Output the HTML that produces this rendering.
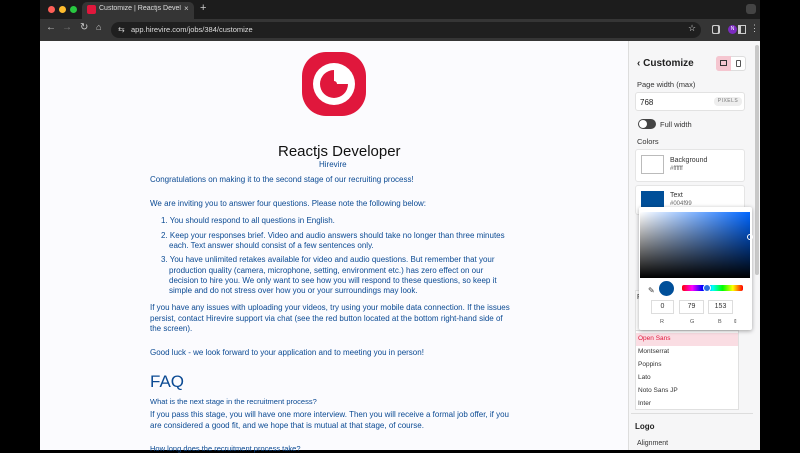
<!DOCTYPE html>
<html><head><meta charset="utf-8"><style>
*{margin:0;padding:0;box-sizing:border-box}
body{width:800px;height:450px;background:#000;font-family:"Liberation Sans",sans-serif;position:relative;overflow:hidden}
.a{position:absolute;white-space:nowrap}
.t{color:#0b4a93;font-size:8px}
.s{font-size:7px;color:#333}
</style></head><body>
<!-- tab bar -->
<div class="a" style="left:40px;top:0;width:720px;height:19px;background:#1c1c1c"></div>
<div class="a" style="left:48px;top:6px;width:7px;height:7px;border-radius:50%;background:#fe5f57"></div>
<div class="a" style="left:59px;top:6px;width:7px;height:7px;border-radius:50%;background:#febc2e"></div>
<div class="a" style="left:70px;top:6px;width:7px;height:7px;border-radius:50%;background:#28c840"></div>
<div class="a" style="left:82px;top:2px;width:112px;height:17px;background:#353535;border-radius:5px 5px 0 0"></div>
<div class="a" style="left:87px;top:5px;width:9px;height:9px;border-radius:2px;background:#e0173c"></div>
<div class="a" style="left:99px;top:5px;font-size:7px;color:#ddd;width:82px;overflow:hidden">Customize | Reactjs Develope</div>
<div class="a" style="left:184px;top:4px;font-size:8px;color:#ccc">×</div>
<div class="a" style="left:200px;top:2px;font-size:11px;color:#ccc">+</div>
<div class="a" style="left:746px;top:4px;width:10px;height:10px;border-radius:3px;background:#444"></div>
<!-- toolbar -->
<div class="a" style="left:40px;top:19px;width:720px;height:22px;background:#353535"></div>
<div class="a" style="left:46px;top:22px;font-size:10px;color:#ccc">←</div>
<div class="a" style="left:62px;top:22px;font-size:10px;color:#777">→</div>
<div class="a" style="left:80px;top:22px;font-size:10px;color:#ccc">↻</div>
<div class="a" style="left:96px;top:22px;font-size:9px;color:#ccc">⌂</div>
<div class="a" style="left:111px;top:22px;width:590px;height:16px;border-radius:8px;background:#1f1f1f"></div>
<div class="a" style="left:118px;top:25px;font-size:8px;color:#ccc">⇆</div>
<div class="a" style="left:131px;top:25px;font-size:7.5px;color:#ddd">app.hirevire.com/jobs/384/customize</div>
<div class="a" style="left:688px;top:23px;font-size:9px;color:#ddd">☆</div>
<div class="a" style="left:712px;top:25px;width:7px;height:9px;border:1px solid #ccc;border-radius:2px"></div>
<div class="a" style="left:714px;top:25px;width:8px;height:9px;border:1px solid #ccc;border-left-width:3px;display:none"></div>
<div class="a" style="left:712px;top:25px;width:8px;height:9px;border:1px solid #ccc;border-radius:2px"></div>
<div class="a" style="left:718px;top:25px;width:8px;height:9px;border:1px solid #ccc;border-right-width:3px;left:713px;display:none"></div>
<div class="a" style="left:712px;top:25px;width:9px;height:10px;border:1px solid #ccc;border-right-width:3px;display:none"></div>
<div class="a" style="left:712px;top:25px;width:9px;height:10px;border:1px solid #ccc;border-right-width:3px;left:712px;display:none"></div>
<div class="a" style="left:712px;top:25px;width:9px;height:10px;border:1px solid #ccc;display:none"></div>
<div class="a" style="left:712px;top:25px;display:none"></div>
<div class="a" style="left:712px;top:25px;width:9px;height:10px;border:1px solid #ccc;border-right-width:3px;left:712px;display:none"></div>
<div class="a" style="left:712px;top:25px;width:8px;height:9px;border:1px solid #ccc;border-right-width:3px;left:712px;display:none"></div>
<div class="a" style="left:712px;top:25px;width:8px;height:9px;left:712px;display:none"></div>
<div class="a" style="left:712px;top:25px;width:8px;height:9px;left:712px;display:none"></div>
<div class="a" style="left:712px;top:25px;display:none"></div>
<div class="a" style="left:712px;top:25px;display:none"></div>
<div class="a" style="left:712px;top:25px;display:none"></div>
<div class="a" style="left:712px;top:25px;display:none"></div>
<div class="a" style="left:712px;top:25px;width:8px;height:9px;border:1px solid #ccc;border-right-width:3px;left:712px;display:none"></div>
<div class="a" style="left:712px;top:25px;display:none"></div>
<div class="a" style="left:712px;top:25px;display:none"></div>
<div class="a" style="left:710px;top:25px;display:none"></div>
<div class="a" style="left:712px;top:25px;display:none"></div>
<div class="a" style="left:712px;top:25px;display:none"></div>
<div class="a" style="left:712px;top:25px;display:none"></div>
<div class="a" style="left:712px;top:25px;display:none"></div>
<div class="a" style="left:711px;top:25px;display:none"></div>
<div class="a" style="left:712px;top:25px;display:none"></div>
<div class="a" style="left:712px;top:25px;display:none"></div>
<div class="a" style="left:712px;top:25px;display:none"></div>
<div class="a" style="left:712px;top:25px;display:none"></div>
<div class="a" style="left:712px;top:25px;display:none"></div>
<div class="a" style="left:712px;top:25px;display:none"></div>
<div class="a" style="left:712px;top:25px;display:none"></div>
<div class="a" style="left:712px;top:25px;display:none"></div>
<div class="a" style="left:712px;top:25px;display:none"></div>
<div class="a" style="left:735px;top:25px;width:8px;height:9px;border:1px solid #ccc;border-left-width:3px;left:738px"></div>
<div class="a" style="left:728px;top:24px;width:10px;height:10px;border-radius:50%;background:#7b2bc0;font-size:5px;color:#fff;text-align:center;line-height:10px;left:729px;display:none"></div>
<div class="a" style="left:728px;top:25px;width:9px;height:9px;border-radius:50%;background:#7b2bc0;font-size:5px;color:#fff;text-align:center;line-height:9px">N</div>
<div class="a" style="left:750px;top:23px;font-size:9px;color:#ccc">⋮</div>
<!-- content -->
<div class="a" style="left:40px;top:41px;width:588px;height:409px;background:#fbfbfe"></div>
<svg class="a" style="left:300px;top:51px" width="68" height="66" viewBox="0 0 68 66">
<rect x="2" y="1" width="64" height="64" rx="24" fill="#e0173c"/>
<circle cx="34" cy="33" r="21" fill="#fff"/>
<circle cx="34" cy="33" r="14" fill="#e0173c"/>
<path d="M34 33 L34 17 A16 16 0 0 1 50 33 Z" fill="#fff"/>
<circle cx="34" cy="33" r="3" fill="#e0173c"/>
</svg>
<div class="a" style="left:278px;top:143px;font-size:15px;color:#111">Reactjs Developer</div>
<div class="a t" style="left:319px;top:160px">Hirevire</div>
<div class="a t" style="left:150px;top:175px">Congratulations on making it to the second stage of our recruiting process!</div>
<div class="a t" style="left:150px;top:199px">We are inviting you to answer four questions. Please note the following below:</div>
<div class="a t" style="left:161px;top:216px">1. You should respond to all questions in English.</div>
<div class="a t" style="left:161px;top:231px">2. Keep your responses brief. Video and audio answers should take no longer than three minutes</div>
<div class="a t" style="left:169px;top:241px">each. Text answer should consist of a few sentences only.</div>
<div class="a t" style="left:161px;top:255px">3. You have unlimited retakes available for video and audio questions. But remember that your</div>
<div class="a t" style="left:169px;top:266px">production quality (camera, microphone, setting, environment etc.) has zero effect on our</div>
<div class="a t" style="left:169px;top:276px">decision to hire you. We only want to see how you will respond to these questions, so keep it</div>
<div class="a t" style="left:169px;top:286px">simple and do not stress over how you or your surroundings may look.</div>
<div class="a t" style="left:150px;top:303px">If you have any issues with uploading your videos, try using your mobile data connection. If the issues</div>
<div class="a t" style="left:150px;top:314px">persist, contact Hirevire support via chat (see the red button located at the bottom right-hand side of</div>
<div class="a t" style="left:150px;top:324px">the screen).</div>
<div class="a t" style="left:150px;top:348px">Good luck - we look forward to your application and to meeting you in person!</div>
<div class="a" style="left:150px;top:372px;font-size:17px;color:#0b4a93">FAQ</div>
<div class="a t" style="left:150px;top:397px;font-size:7.5px">What is the next stage in the recruitment process?</div>
<div class="a t" style="left:150px;top:410px">If you pass this stage, you will have one more interview. Then you will receive a formal job offer, if you</div>
<div class="a t" style="left:150px;top:421px">are considered a good fit, and we hope that is mutual at that stage, of course.</div>
<div class="a t" style="left:150px;top:444px;font-size:7.5px">How long does the recruitment process take?</div>
<!-- sidebar -->
<div class="a" style="left:628px;top:41px;width:132px;height:409px;background:#f6f6f7;border-left:1px solid #ddd"></div>
<div class="a" style="left:755px;top:45px;width:4px;height:230px;background:#c8c8c8;border-radius:2px"></div>
<div class="a" style="left:637px;top:58px;font-size:10px;font-weight:bold;color:#222">‹ Customize</div>
<div class="a" style="left:716px;top:56px;width:30px;height:15px;border:1px solid #ddd;border-radius:3px;background:#fff"></div>
<div class="a" style="left:716px;top:56px;width:15px;height:15px;background:#f5c6d0;border-radius:3px 0 0 3px"></div>
<div class="a" style="left:720px;top:60px;width:7px;height:6px;border:1px solid #333"></div>
<div class="a" style="left:736px;top:60px;width:5px;height:7px;border:1px solid #555;border-radius:1px"></div>
<div class="a s" style="left:637px;top:80px;font-size:7.5px">Page width (max)</div>
<div class="a" style="left:635px;top:92px;width:110px;height:19px;background:#fff;border:1px solid #e2e2e2;border-radius:3px"></div>
<div class="a s" style="left:640px;top:98px;font-size:8px;color:#222">768</div>
<div class="a" style="left:714px;top:97px;width:28px;height:9px;background:#eee;border-radius:4px;font-size:5px;color:#777;text-align:center;line-height:9px;letter-spacing:.5px">PIXELS</div>
<div class="a" style="left:638px;top:119px;width:18px;height:10px;background:#444;border-radius:5px"></div>
<div class="a" style="left:639px;top:120px;width:8px;height:8px;background:#fff;border-radius:50%"></div>
<div class="a s" style="left:660px;top:120px;font-size:7.5px">Full width</div>
<div class="a s" style="left:637px;top:137px;font-size:7.5px">Colors</div>
<div class="a" style="left:635px;top:149px;width:110px;height:33px;background:#fff;border:1px solid #e5e5e5;border-radius:3px"></div>
<div class="a" style="left:641px;top:155px;width:23px;height:19px;border:1px solid #bbb;background:#fff"></div>
<div class="a s" style="left:670px;top:157px">Background</div>
<div class="a s" style="left:670px;top:166px;font-size:6px;color:#666">#ffffff</div>
<div class="a" style="left:635px;top:185px;width:110px;height:30px;background:#fff;border:1px solid #e5e5e5;border-radius:3px"></div>
<div class="a" style="left:641px;top:191px;width:23px;height:19px;background:#004f99"></div>
<div class="a s" style="left:670px;top:192px">Text</div>
<div class="a s" style="left:670px;top:201px;font-size:6px;color:#666">#004f99</div>
<div class="a" style="left:635px;top:290px;width:10px;height:50px;background:#fff;border:1px solid #e5e5e5"></div>
<div class="a s" style="left:637px;top:294px">F</div>
<div class="a" style="left:635px;top:330px;width:104px;height:80px;background:#fff;border:1px solid #e0e0e0"></div>
<div class="a" style="left:636px;top:333px;width:102px;height:13px;background:#fadde3"></div>
<div class="a s" style="left:638px;top:335px;font-size:6.5px;color:#e0173c">Open Sans</div>
<div class="a s" style="left:638px;top:348px;font-size:6.5px">Montserrat</div>
<div class="a s" style="left:638px;top:361px;font-size:6.5px">Poppins</div>
<div class="a s" style="left:638px;top:374px;font-size:6.5px">Lato</div>
<div class="a s" style="left:638px;top:387px;font-size:6.5px">Noto Sans JP</div>
<div class="a s" style="left:638px;top:400px;font-size:6.5px">Inter</div>
<div class="a" style="left:631px;top:413px;width:122px;height:1px;background:#ddd"></div>
<div class="a" style="left:635px;top:422px;font-size:8px;font-weight:bold;color:#222">Logo</div>
<div class="a s" style="left:637px;top:440px;font-size:7px">Alignment</div>
<!-- color picker -->
<div class="a" style="left:639px;top:207px;width:113px;height:123px;background:#fff;box-shadow:0 1px 4px rgba(0,0,0,.35);border-radius:2px"></div>
<div class="a" style="left:640px;top:212px;width:110px;height:66px;background:linear-gradient(to bottom,rgba(0,0,0,0),#000),linear-gradient(to right,#fff,#0066ff)"></div>
<div class="a" style="left:747px;top:234px;width:6px;height:6px;border:1px solid #fff;border-radius:50%"></div>
<div class="a" style="left:648px;top:286px;font-size:8px;color:#333">✎</div>
<div class="a" style="left:659px;top:281px;width:15px;height:15px;border-radius:50%;background:#004f99"></div>
<div class="a" style="left:682px;top:285px;width:61px;height:6px;border-radius:2px;background:linear-gradient(to right,#f00,#f0f,#00f,#0ff,#0f0,#ff0,#f00)"></div>
<div class="a" style="left:703px;top:284px;width:8px;height:8px;border-radius:50%;background:#2a70e0;border:1px solid #fff"></div>
<div class="a" style="left:651px;top:300px;width:23px;height:14px;border:1px solid #ddd;font-size:7px;text-align:center;line-height:12px;color:#333">0</div>
<div class="a" style="left:679px;top:300px;width:25px;height:14px;border:1px solid #ddd;font-size:7px;text-align:center;line-height:12px;color:#333">79</div>
<div class="a" style="left:708px;top:300px;width:25px;height:14px;border:1px solid #ddd;font-size:7px;text-align:center;line-height:12px;color:#333">153</div>
<div class="a" style="left:660px;top:319px;font-size:5.5px;color:#555">R</div>
<div class="a" style="left:690px;top:319px;font-size:5.5px;color:#555">G</div>
<div class="a" style="left:718px;top:319px;font-size:5.5px;color:#555">B</div>
<div class="a" style="left:733px;top:319px;font-size:5.5px;color:#555">⇕</div>
</body></html>
